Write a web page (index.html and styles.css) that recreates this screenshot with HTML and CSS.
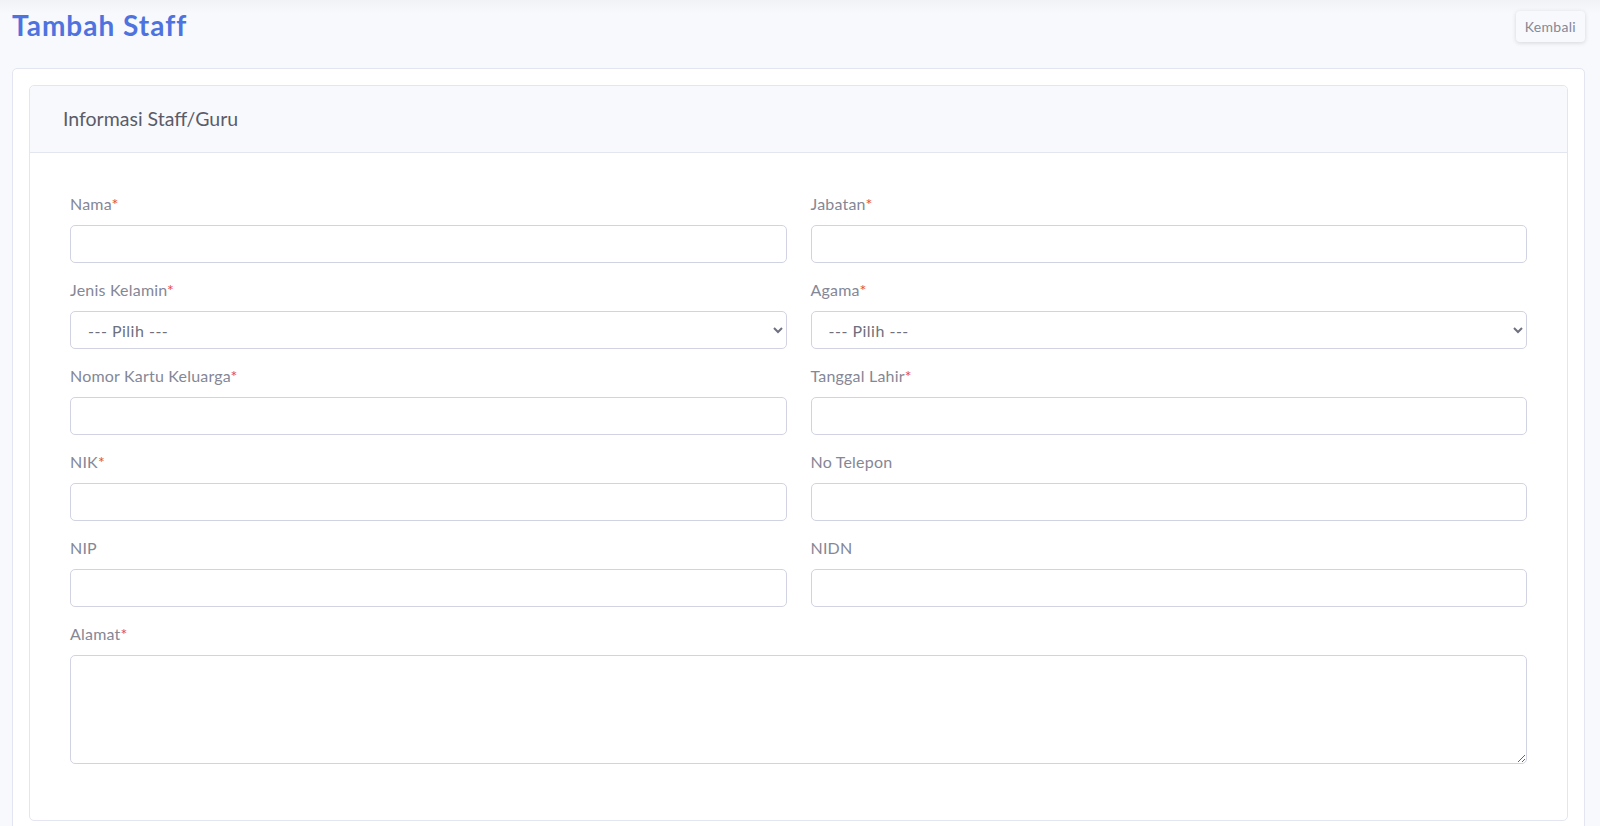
FILE: index.html
```html
<!DOCTYPE html>
<html lang="id">
<head>
<meta charset="utf-8">
<title>Tambah Staff</title>
<link rel="stylesheet" href="styles.css">
</head>
<body>
<div class="page">
  <div class="page-head">
    <h1 class="page-title">Tambah Staff</h1>
    <button class="btn-back" type="button">Kembali</button>
  </div>
  <div class="outer-card">
    <div class="inner-card">
      <div class="inner-head">Informasi Staff/Guru</div>
      <div class="inner-body">
        <div class="form-grid">
          <div class="field">
            <label class="lbl">Nama<span class="req">*</span></label>
            <input class="ctl" type="text">
          </div>
          <div class="field">
            <label class="lbl">Jabatan<span class="req">*</span></label>
            <input class="ctl" type="text">
          </div>
          <div class="field">
            <label class="lbl">Jenis Kelamin<span class="req">*</span></label>
            <select class="ctl sel"><option>--- Pilih ---</option></select>
          </div>
          <div class="field">
            <label class="lbl">Agama<span class="req">*</span></label>
            <select class="ctl sel"><option>--- Pilih ---</option></select>
          </div>
          <div class="field">
            <label class="lbl">Nomor Kartu Keluarga<span class="req">*</span></label>
            <input class="ctl" type="text">
          </div>
          <div class="field">
            <label class="lbl">Tanggal Lahir<span class="req">*</span></label>
            <input class="ctl" type="text">
          </div>
          <div class="field">
            <label class="lbl">NIK<span class="req">*</span></label>
            <input class="ctl" type="text">
          </div>
          <div class="field">
            <label class="lbl">No Telepon</label>
            <input class="ctl" type="text">
          </div>
          <div class="field">
            <label class="lbl">NIP</label>
            <input class="ctl" type="text">
          </div>
          <div class="field">
            <label class="lbl">NIDN</label>
            <input class="ctl" type="text">
          </div>
          <div class="field full">
            <label class="lbl">Alamat<span class="req">*</span></label>
            <textarea class="ctl area"></textarea>
          </div>
        </div>
      </div>
    </div>
    <div class="outer-foot"></div>
  </div>
</div>
</body>
</html>
```

FILE: styles.css
```css
* { box-sizing: border-box; }
html, body { margin: 0; padding: 0; }
body {
  background: #f8f9fc;
  font-family: Lato, "Noto Sans", sans-serif;
  color: #858796;
  overflow: hidden;
}
.page {
  padding: 0 15px 0 12px;
  background: linear-gradient(#f1f2f6 0, #f8f9fc 14px);
}
.page-head {
  display: flex;
  justify-content: space-between;
  align-items: flex-start;
  height: 68px;
}
.page-title {
  margin: 0;
  padding-top: 8px;
  font-size: 28px;
  line-height: 34px;
  font-weight: 700;
  letter-spacing: 1px;
  color: #4e73df;
}
.btn-back {
  margin-top: 11px;
  height: 31px;
  padding: 0 9px;
  border: none;
  border-radius: 4px;
  background: #f8f9fc;
  box-shadow: 0 1px 4px rgba(58, 59, 69, 0.18);
  font-family: inherit;
  font-size: 14px;
  letter-spacing: 0.3px;
  color: #858796;
}
.outer-card {
  background: #fff;
  border: 1px solid #e3e6f0;
  border-radius: 5px;
  padding: 16px;
}
.inner-card {
  border: 1px solid #e3e6f0;
  border-radius: 5px;
}
.inner-head {
  background: #f8f9fc;
  border-bottom: 1px solid #e3e6f0;
  border-radius: 5px 5px 0 0;
  padding: 20px 33px 21px;
  font-size: 19.5px;
  line-height: 25px;
  color: #5a5c69;
}
.inner-body {
  padding: 39px 40px 56px;
}
.form-grid {
  display: grid;
  grid-template-columns: 1fr 1fr;
  column-gap: 24px;
  row-gap: 15px;
}
.field { display: flex; flex-direction: column; }
.field.full { grid-column: 1 / span 2; }
.lbl {
  font-size: 16px;
  line-height: 24px;
  margin-bottom: 9px;
  letter-spacing: 0.2px;
  color: #858796;
}
.req { color: #e74a3b; }
.ctl {
  height: 38px;
  border: 1px solid #d1d3e2;
  border-radius: 5px;
  background: #fff;
  font-family: inherit;
  font-size: 16px;
  color: #6e707e;
  padding: 6px 12px;
}
.sel { padding-left: 13px; letter-spacing: 0.5px; }
.area { height: 109px; resize: vertical; }
.outer-foot { height: 40px; }
```
